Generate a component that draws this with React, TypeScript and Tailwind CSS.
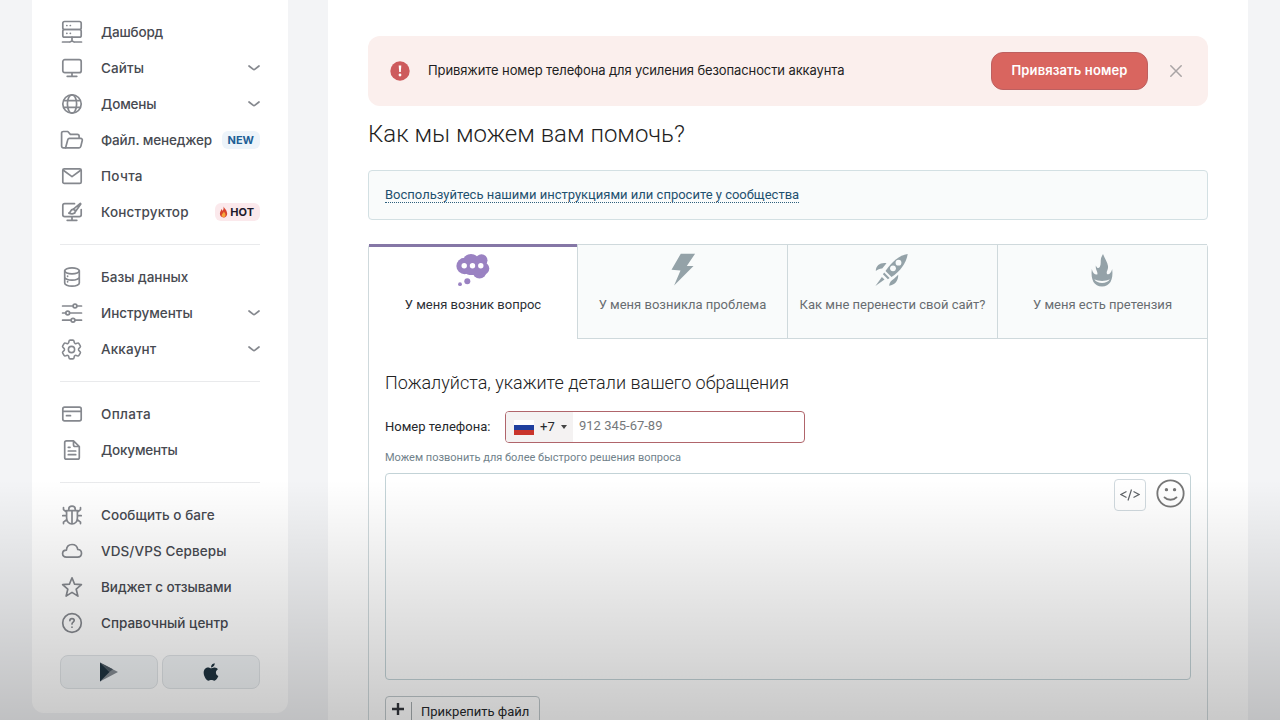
import React from "react";
import { HiOutlineCog6Tooth } from "react-icons/hi2";
import { FaApple } from "react-icons/fa";

interface MenuItem {
    label: string;
    icon: React.ReactNode;
    tracking: string;
    expandable?: boolean;
    badge?: "new" | "hot";
}

interface TabItem {
    label: string;
    icon: React.ReactNode;
}

const StrokeIcon = ({ children }: { children: React.ReactNode }) => (
    <svg viewBox="0 0 24 24" className="w-6 h-6" fill="none" stroke="currentColor" strokeWidth="1.7" strokeLinecap="round" strokeLinejoin="round">
        {children}
    </svg>
);

const menuGroups: MenuItem[][] = [
    [
        {
            label: "Дашборд",
            tracking: "tracking-[-0.2px]",
            icon: (
                <StrokeIcon>
                    <rect x="2.8" y="1.5" width="18.4" height="8" rx="1.8" />
                    <rect x="2.8" y="9.5" width="18.4" height="7.7" rx="1.8" />
                    <path d="M12 17.2v4M2.5 22h7.3M14.2 22h7.3M9.8 22l2.2-1 2.2 1M6.8 5.5h.1M10.3 5.5h.1M6.8 13.3h.1M10.3 13.3h.1" />
                </StrokeIcon>
            ),
        },
        {
            label: "Сайты",
            tracking: "tracking-[0.1px]",
            expandable: true,
            icon: (
                <StrokeIcon>
                    <rect x="2.8" y="3.7" width="18.4" height="13" rx="2" />
                    <path d="M12 16.8v3.5M7.2 20.3h9.6" />
                </StrokeIcon>
            ),
        },
        {
            label: "Домены",
            tracking: "tracking-[-0.15px]",
            expandable: true,
            icon: (
                <StrokeIcon>
                    <circle cx="12" cy="12" r="9.2" />
                    <ellipse cx="12" cy="12" rx="4.6" ry="9.2" />
                    <path d="M3.8 8.6h16.4M3.8 15.4h16.4" />
                </StrokeIcon>
            ),
        },
        {
            label: "Файл. менеджер",
            tracking: "tracking-[-0.13px]",
            badge: "new",
            icon: (
                <StrokeIcon>
                    <path d="M5.6 19.8H3.3a1.7 1.7 0 0 1-1.7-1.7V5.2c0-1 .8-1.7 1.7-1.7h4.5l2.6 2.8h6.9c1 0 1.8.8 1.8 1.7v2.2" />
                    <path d="m5.6 19.8 2.2-8.2c.2-.8.8-1.3 1.6-1.3h11.2c1.2 0 1.9 1 1.7 2l-1.5 6.1c-.2.8-.9 1.4-1.7 1.4z" />
                </StrokeIcon>
            ),
        },
        {
            label: "Почта",
            tracking: "tracking-[0.3px]",
            icon: (
                <StrokeIcon>
                    <rect x="2.8" y="4.8" width="18.4" height="14.6" rx="1.5" />
                    <path d="m3.3 6.2 8.7 6.4 8.7-6.4" />
                </StrokeIcon>
            ),
        },
        {
            label: "Конструктор",
            tracking: "tracking-[0.2px]",
            badge: "hot",
            icon: (
                <StrokeIcon>
                    <path d="M14.5 3.7H4.7c-1 0-1.9.8-1.9 1.9v9.2c0 1 .8 1.9 1.9 1.9h14.6c1 0 1.9-.8 1.9-1.9V9.5M12 16.8v3.5M7.2 20.3h9.6" />
                    <path d="m12.8 9.6 7.5-6.2M15.3 11.8l5.5-7.9M12.8 9.4c-2.6 0-1.6 3-4 3.7 3 1.2 6.4.9 6.5-1.5 0-1.2-1-2.2-2.5-2.2Z" />
                </StrokeIcon>
            ),
        },
    ],
    [
        {
            label: "Базы данных",
            tracking: "tracking-normal",
            icon: (
                <StrokeIcon>
                    <ellipse cx="12" cy="5.8" rx="7.3" ry="3" />
                    <path d="M4.7 5.8v12.2c0 1.7 3.2 3.2 7.3 3.2s7.3-1.5 7.3-3.2V5.8M4.7 12c0 1.7 3.2 3.1 7.3 3.1s7.3-1.4 7.3-3.1M7.6 11.1v.2M7.6 16.6v.2" />
                </StrokeIcon>
            ),
        },
        {
            label: "Инструменты",
            tracking: "tracking-[-0.05px]",
            expandable: true,
            icon: (
                <StrokeIcon>
                    <circle cx="15" cy="5" r="1.9" />
                    <circle cx="7.7" cy="12" r="1.9" />
                    <circle cx="13" cy="19.2" r="1.9" />
                    <path d="M2.6 5H13M17 5h4.5M2.6 12h3.1M9.7 12h11.8M2.6 19.2H11M15 19.2h6.5" />
                </StrokeIcon>
            ),
        },
        {
            label: "Аккаунт",
            tracking: "tracking-[0.15px]",
            expandable: true,
            icon: <HiOutlineCog6Tooth className="w-[25px] h-[25px] -ml-px" />,
        },
    ],
    [
        {
            label: "Оплата",
            tracking: "tracking-[0.3px]",
            icon: (
                <StrokeIcon>
                    <rect x="2.8" y="5.2" width="18.4" height="13.6" rx="1.8" />
                    <path d="M2.8 9.4h18.4M6.5 13.7h4" />
                </StrokeIcon>
            ),
        },
        {
            label: "Документы",
            tracking: "tracking-[-0.2px]",
            icon: (
                <StrokeIcon>
                    <path d="M13.5 2.8H6.5c-1 0-1.8.8-1.8 1.8v14.8c0 1 .8 1.8 1.8 1.8h11c1 0 1.8-.8 1.8-1.8V8.5zM13.5 2.8v4c0 1 .8 1.7 1.7 1.7h4.1M8.3 9.3h1.7M8.3 13h7.4M8.3 16.7h7.4" />
                </StrokeIcon>
            ),
        },
    ],
    [
        {
            label: "Сообщить о баге",
            tracking: "tracking-[0.05px]",
            icon: (
                <StrokeIcon>
                    <path d="M6.6 7.6h10.8v7.2c0 3.6-2.2 6.2-5.4 6.2s-5.4-2.6-5.4-6.2zM8.8 7.4V6c0-1.7 1.3-2.8 3.2-2.8s3.2 1.1 3.2 2.8v1.4M12 8v12.5M3.5 4.5v2l3 2.500M20.5 4.5v2l-3 2.500M2.8 12.7h3.7M17.5 12.7h3.7M3.5 20.6v-1.5l3.4-2.6M20.5 20.6v-1.5l-3.4-2.6" />
                </StrokeIcon>
            ),
        },
        {
            label: "VDS/VPS Серверы",
            tracking: "tracking-[0.1px]",
            icon: (
                <StrokeIcon>
                    <path d="M6.5 18.2c-2.3 0-3.9-1.6-3.9-3.6 0-2.1 1.6-3.5 3.8-3.5.3-3.2 2.4-5.6 5.6-5.6 3.1 0 5.3 2 5.8 5 2.2.1 3.7 1.7 3.7 3.8 0 2.3-1.7 3.9-4 3.9z" />
                </StrokeIcon>
            ),
        },
        {
            label: "Виджет с отзывами",
            tracking: "tracking-[-0.05px]",
            icon: (
                <StrokeIcon>
                    <path d="m12 2.8 2.6 6.4 6.8.5-5.2 4.5 1.7 6.9-5.9-3.7-5.9 3.7 1.7-6.9-5.2-4.5 6.8-.5z" />
                </StrokeIcon>
            ),
        },
        {
            label: "Справочный центр",
            tracking: "tracking-normal",
            icon: (
                <StrokeIcon>
                    <circle cx="12" cy="12" r="9.3" />
                    <path d="M9.9 9.6c0-1.2.9-2 2.1-2s2.2.8 2.2 2c0 1.5-2.2 1.5-2.2 3.3M12 16v.2" />
                </StrokeIcon>
            ),
        },
    ],
];

const tabs: TabItem[] = [
    {
        label: "У меня возник вопрос",
        icon: (
            <svg viewBox="0.5 0 34 34" className="w-[34px] h-[34px]" fill="#9a82c2">
                <circle cx="9.2" cy="13" r="8.3" />
                <circle cx="15.5" cy="9.2" r="8.3" />
                <circle cx="26" cy="7.200" r="6" />
                <circle cx="27.300" cy="15.500" r="6.500" />
                <circle cx="24" cy="18.500" r="7" />
                <rect x="9" y="8" width="18" height="14" rx="5" />
                <circle cx="11.8" cy="28.2" r="3" />
                <circle cx="4.5" cy="31.2" r="1.9" />
                <g fill="#fff">
                    <circle cx="8.7" cy="12.8" r="2.7" />
                    <circle cx="17" cy="12.8" r="2.7" />
                    <circle cx="25.3" cy="12.8" r="2.7" />
                </g>
            </svg>
        ),
    },
    {
        label: "У меня возникла проблема",
        icon: (
            <svg viewBox="-0.5 0 34 34" className="w-[34px] h-[34px]" fill="#94a2a8">
                <path d="M14.3.7h14.3l-8.3 12.3H27L7.6 32.4 14 17.4l-9-.7z" />
            </svg>
        ),
    },
    {
        label: "Как мне перенести свой сайт?",
        icon: (
            <svg viewBox="1.5 0 34 34" className="w-[34px] h-[34px] overflow-visible" fill="#94a2a8">
                <path d="M33.2 1C25 2 17 9 11 18l6 6C25 19 32 10 33.2 1Z" />
                <path d="M1.3 18C1.5 12 6 9.3 12 10.2L7.7 15.4C5.3 15.3 3.3 16.5 1.3 18ZM23.7 21.7l-4.2 4c-3 1.8-4.7 4-4.9 7C20.5 32 24 27.5 23.7 21.7ZM9.7 19.6l5.4 5.4-1.7 1.2-5-5zM.9 33l6.5-9 2.6 2.6z" />
                <g fill="#f9fbfb">
                    <circle cx="24" cy="9.7" r="2.9" />
                    <circle cx="18.5" cy="15.3" r="2.9" />
                </g>
            </svg>
        ),
    },
    {
        label: "У меня есть претензия",
        icon: (
            <svg viewBox="1 0 34 34" className="w-[34px] h-[34px]" fill="#94a2a8">
                <path d="M18 1c2 5 4.5 8 5 12 .5 4-2 5-1 8 2 1 4.2-1 5.2-5 1.3 11-2.4 17.5-10.2 17.5S5.5 27 6.8 16c1 4 3 6 5.5 5.5 1-2.5-2-4.5-1.5-9 1 2.5 2.5 3.5 4 1.5 1.5-3 .5-6 1.2-8.5.4-1.7 1.3-3 2-4.5Z" />
                <path d="M9.3 26.3c4.5 2.3 11 2.3 15.5 0-2.8 5-12.5 5-15.5 0Z" fill="#f9fbfb" />
            </svg>
        ),
    },
];

const FlameMark = () => (
    <svg viewBox="0 0 10 13" className="w-[9px] h-3">
        <path d="M5 .5C6 3 8.5 4 9 7.5 9.5 10.5 7.5 12.5 5 12.5S.8 10.8 1 8C1.2 6 2.2 5.5 2.5 3.5c1 .5 1.3 1.2 1.5 2C5 4 5.3 2.5 5 .5Z" fill="#d8432e" />
        <path d="M5.2 6c1.3 1.5 2.2 2.4 2 4-.2 1.5-1 2.2-2.2 2.2S3 11.5 3 10.2C3 8.5 5 8 5.2 6Z" fill="#f6a63a" />
    </svg>
);

const Badge = ({ kind }: { kind: "new" | "hot" }) => {
    if (kind === "new") {
        return <span className="ml-auto flex items-center h-[18px] px-[6px] rounded-md bg-[#edf4fa] text-[11px] font-bold text-[#1d5f96]">NEW</span>;
    }
    return (
        <span className="ml-auto flex items-center gap-0.5 h-[18px] pl-1 pr-[6px] rounded-md bg-[#fbe9ec] text-[11px] font-bold text-[#1c1a2b]">
            <FlameMark />
            HOT
        </span>
    );
};

const MenuRow = ({ item }: { item: MenuItem }) => (
    <a className="flex items-center h-9 text-[#474a51]">
        <span className="w-6 mr-[17px] text-[#85888e]">{item.icon}</span>
        <span className={`text-[13.5px] leading-5 font-medium whitespace-nowrap ${item.tracking}`}>{item.label}</span>
        {item.badge && <Badge kind={item.badge} />}
        {item.expandable && (
            <svg viewBox="0 0 12 8" className="ml-auto w-3 h-2" fill="none" stroke="#85888e" strokeWidth="1.7" strokeLinecap="round" strokeLinejoin="round">
                <path d="m1 2 4 3.200q1 .8 2 0L11 2" />
            </svg>
        )}
    </a>
);

const Sidebar = () => (
    <aside className="w-64 h-[713px] px-7 pt-[14px] rounded-b-xl bg-white font-['Inter','Noto_Sans',sans-serif]">
        {menuGroups.map((group, i) => (
            <div key={i}>
                {i > 0 && <div className="h-px my-[14px] bg-[#e9eaec]" />}
                {group.map((item) => (
                    <MenuRow key={item.label} item={item} />
                ))}
            </div>
        ))}
        <div className="flex gap-1 mt-[14px]">
            <button className="flex items-center justify-center flex-1 h-[34px] rounded-lg border border-[#dfe3e6] bg-[#f1f4f6]">
                <svg viewBox="0 0 20 20" className="w-5 h-5">
                    <path d="M1 .5v19L19 10z" fill="#848b92" />
                    <path d="M1 .5v19L10.5 10z" fill="#1f3340" />
                    <path d="M1 .5 10.5 10l3.5-2.7z" fill="#4c5963" />
                </svg>
            </button>
            <button className="flex items-center justify-center flex-1 h-[34px] rounded-lg border border-[#dfe3e6] bg-[#f1f4f6]">
                <FaApple className="w-5 h-5 text-[#1f3340]" />
            </button>
        </div>
    </aside>
);

const PhoneAlert = () => (
    <div className="flex items-center h-[70px] pl-[22px] rounded-xl bg-[#fbefed] font-['Inter','Noto_Sans',sans-serif]">
        <svg viewBox="0 0 20 20" className="w-5 h-5 mr-[18px]">
            <circle cx="10" cy="10" r="9.7" fill="#cd5a5c" />
            <path d="M8.7 4.5h2.6l-.5 6.6H9.2z" fill="#fff" />
            <circle cx="10" cy="14" r="1.4" fill="#fff" />
        </svg>
        <span className="text-[13px] tracking-[-0.11px] text-[#1e1e22] whitespace-nowrap">Привяжите номер телефона для усиления безопасности аккаунта</span>
        <button className="ml-auto w-[157px] h-[38px] rounded-xl border border-[#bd6060] bg-[#d9655f] text-[13px] tracking-[0.12px] font-semibold text-white whitespace-nowrap">
            Привязать номер
        </button>
        <svg viewBox="0 0 12 12" className="w-3 h-3 ml-[22px] mr-[26px]" stroke="#a9a4a5" strokeWidth="1.5" strokeLinecap="round">
            <path d="m.8.8 10.4 10.4M11.2.8.8 11.2" />
        </svg>
    </div>
);

const SupportTabs = () => (
    <div className="flex h-[95px]">
        {tabs.map((tab, i) => (
            <button
                key={tab.label}
                className={`flex flex-col items-center text-[13px] whitespace-nowrap ${i === 0
                    ? "w-[208px] border-t-[3px] border-[#8577a6] pt-1.5 text-[#2c2f36]"
                    : "flex-1 border-t border-l border-b border-[#cfd9dc] bg-[#f9fbfb] pt-2 text-[#686d71]"
                    }`}
            >
                {tab.icon}
                <span className="mt-2 leading-5">{tab.label}</span>
            </button>
        ))}
    </div>
);

const TicketForm = () => (
    <div className="px-4 text-[13px] text-[#25282c]">
        <h2 className="mt-[31px] text-[18px] leading-[26px] font-light text-[#222]">Пожалуйста, укажите детали вашего обращения</h2>
        <div className="flex items-center mt-[15px]">
            <label className="w-[120px]">Номер телефона:</label>
            <div className="flex w-[300px] h-8 rounded border border-[#b0656b] bg-white overflow-hidden">
                <div className="flex items-center w-[67px] pl-2 bg-[#f4f2f2]">
                    <span className="w-5 h-[15px] mr-1.5 flex flex-col">
                        <span className="flex-1 bg-white" />
                        <span className="flex-1 bg-[#1f3f9e]" />
                        <span className="flex-1 bg-[#c9352c]" />
                    </span>
                    +7
                    <span className="ml-1.5 border-x-[3px] border-x-transparent border-t-4 border-t-[#444]" />
                </div>
                <span className="ml-1.5 leading-7 text-[#75787b]">912 345-67-89</span>
            </div>
        </div>
        <p className="mt-[7px] text-[11px] leading-4 text-[#71828b]">Можем позвонить для более быстрого решения вопроса</p>
        <div className="flex justify-end w-[806px] h-[207px] mt-[7px] pt-[5px] pr-[5px] rounded border border-[#c3d3d7] bg-white">
            <button className="flex items-center justify-center w-8 h-8 mr-[10px] rounded border border-[#d0d9de]">
                <svg viewBox="0 0 20 12" className="w-5 h-3" fill="none" stroke="#606468" strokeWidth="1.2">
                    <path d="M6.5 2.5 1 5.5l5.5 3M13.5 2.5l5.5 3-5.5 3M11.5.5 8 11.5" />
                </svg>
            </button>
            <svg viewBox="0 0 30 30" className="w-[29px] h-[29px]" fill="none" stroke="#777" strokeWidth="1.9" strokeLinecap="round">
                <circle cx="15" cy="15" r="13.6" />
                <path d="M8.8 19c3 3.3 9.4 3.3 12.4 0" />
                <circle cx="10.8" cy="11" r=".8" fill="#777" />
                <circle cx="19.2" cy="11" r=".8" fill="#777" />
            </svg>
        </div>
        <button className="flex items-center w-[155px] h-8 mt-4 rounded border border-[#bfc8cb] whitespace-nowrap">
            <svg viewBox="0 0 12 12" className="w-3 h-3 ml-1.5 mb-1.5" stroke="#33363c" strokeWidth="2.4">
                <path d="M6 0v12M0 6h12" />
            </svg>
            <span className="w-px h-5 ml-[7px] mr-[9px] bg-[#a5acaf]" />
            Прикрепить файл
        </button>
    </div>
);

export default function App() {
    return (
        <div className="relative flex items-start gap-10 w-[1280px] h-[720px] pl-8 bg-[#f3f4f6] overflow-hidden">
            <Sidebar />
            <main className="w-[920px] h-[760px] px-10 pt-9 bg-white font-['Roboto',sans-serif]">
                <PhoneAlert />
                <h1 className="mt-3 text-[24px] leading-8 font-light text-[#1f1f1f]">Как мы можем вам помочь?</h1>
                <div className="flex items-center h-[50px] mt-5 px-4 rounded border border-[#d3e0e3] bg-[#f9fbfb]">
                    <a className="border-b border-dotted border-[#2d5f7d] text-[13px] leading-[15px] text-[#1e506f]">
                        Воспользуйтесь нашими инструкциями или спросите у сообщества
                    </a>
                </div>
                <section className="w-[840px] h-[520px] mt-6 border-x border-[#cfd9dc] rounded-t">
                    <SupportTabs />
                    <TicketForm />
                </section>
            </main>
            {/* Bottom shade over the whole page */}
            <div className="absolute inset-x-0 bottom-0 h-[240px] bg-gradient-to-b from-black/0 to-black/21 pointer-events-none" />
        </div>
    );
}
